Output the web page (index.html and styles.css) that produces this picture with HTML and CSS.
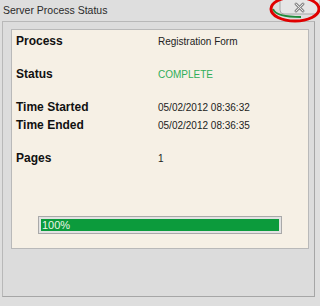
FILE: index.html
```html
<html>
<head>
    <link rel="stylesheet" href="styles.css">
</head>
<body>
    <div id="window">
        <div id="titlebar">Server Process Status</div>
        <svg id="close" xmlns="http://www.w3.org/2000/svg" width="56" height="26" viewBox="264 0 56 26">
            <rect x="280" y="-4" width="40" height="18" rx="4" fill="#e6e6e6" stroke="#a8a8a8" />
            <path d="M296,4l7,7m0,-7l-7,7" stroke="#8a8a8a" stroke-width="3" stroke-linecap="round" />
            <path d="M296,4l7,7m0,-7l-7,7" stroke="#e6e6e6" stroke-width="1" stroke-linecap="round" />
            <path d="M273,9c2,6,12,8,28,8" fill="none" stroke="#1f8a3a" stroke-width="2" />
            <ellipse cx="295" cy="9" rx="24" ry="12" fill="none" stroke="#e00000" stroke-width="3" />
        </svg>
        <div id="frame">
            <div id="panel">
                <div class="row"><span class="label">Process</span><span class="value">Registration Form</span></div>
                <div class="row gap"><span class="label">Status</span><span class="value done">COMPLETE</span></div>
                <div class="row gap"><span class="label">Time Started</span><span class="value">05/02/2012 08:36:32</span></div>
                <div class="row"><span class="label">Time Ended</span><span class="value">05/02/2012 08:36:35</span></div>
                <div class="row gap"><span class="label">Pages</span><span class="value">1</span></div>
                <div id="progress">
                    <div class="bar" style="width: 100%;">100%</div>
                </div>
            </div>
        </div>
    </div>
</body>
</html>
```
FILE: styles.css
```css
html,
body {
    margin: 0px;
    width: 100%;
    height: 100%;
    background: #dedede;
}

#window {
    position: relative;
    width: 320px;
    height: 306px;
    font-family: "Liberation Sans", Arial, sans-serif;
    color: #1a1a1a;
}

#titlebar {
    height: 21px;
    padding-left: 3px;
    font-size: 10.5px;
    line-height: 20px;
    color: #2a2a2a;
}

#close {
    position: absolute;
    top: 0px;
    right: 0px;
}

#frame {
    margin-left: 2px;
    width: 313px;
    height: 276px;
    border: 1px solid #a6a6a6;
    border-left-color: #b8b8b8;
    border-top-color: #b8b8b8;
    background: #dcdcdc;
    padding: 7px 0 0 8px;
    box-sizing: border-box;
}

#panel {
    width: 298px;
    height: 220px;
    border: 1px solid #b9b9b9;
    background: #f6f0e5;
    box-sizing: border-box;
    padding: 2px 0 0 4px;
}

.row {
    display: flex;
    align-items: center;
    height: 18px;
}

.row.gap {
    margin-top: 15px;
}

.label {
    width: 142px;
    font-size: 12px;
    font-weight: bold;
    color: #111;
}

.value {
    font-size: 10px;
    color: #222;
}

.value.done {
    color: #2fae58;
}

#progress {
    margin: 49px 0 0 22px;
    width: 244px;
    height: 18px;
    border: 1px solid #a9a9a9;
    background: #e2e2e2;
    padding: 2px;
    box-sizing: border-box;
}

.bar {
    height: 100%;
    background: #0c9b3c;
    color: #eaf5e6;
    font-size: 11px;
    line-height: 13px;
    padding-left: 1px;
    box-sizing: border-box;
}
```
